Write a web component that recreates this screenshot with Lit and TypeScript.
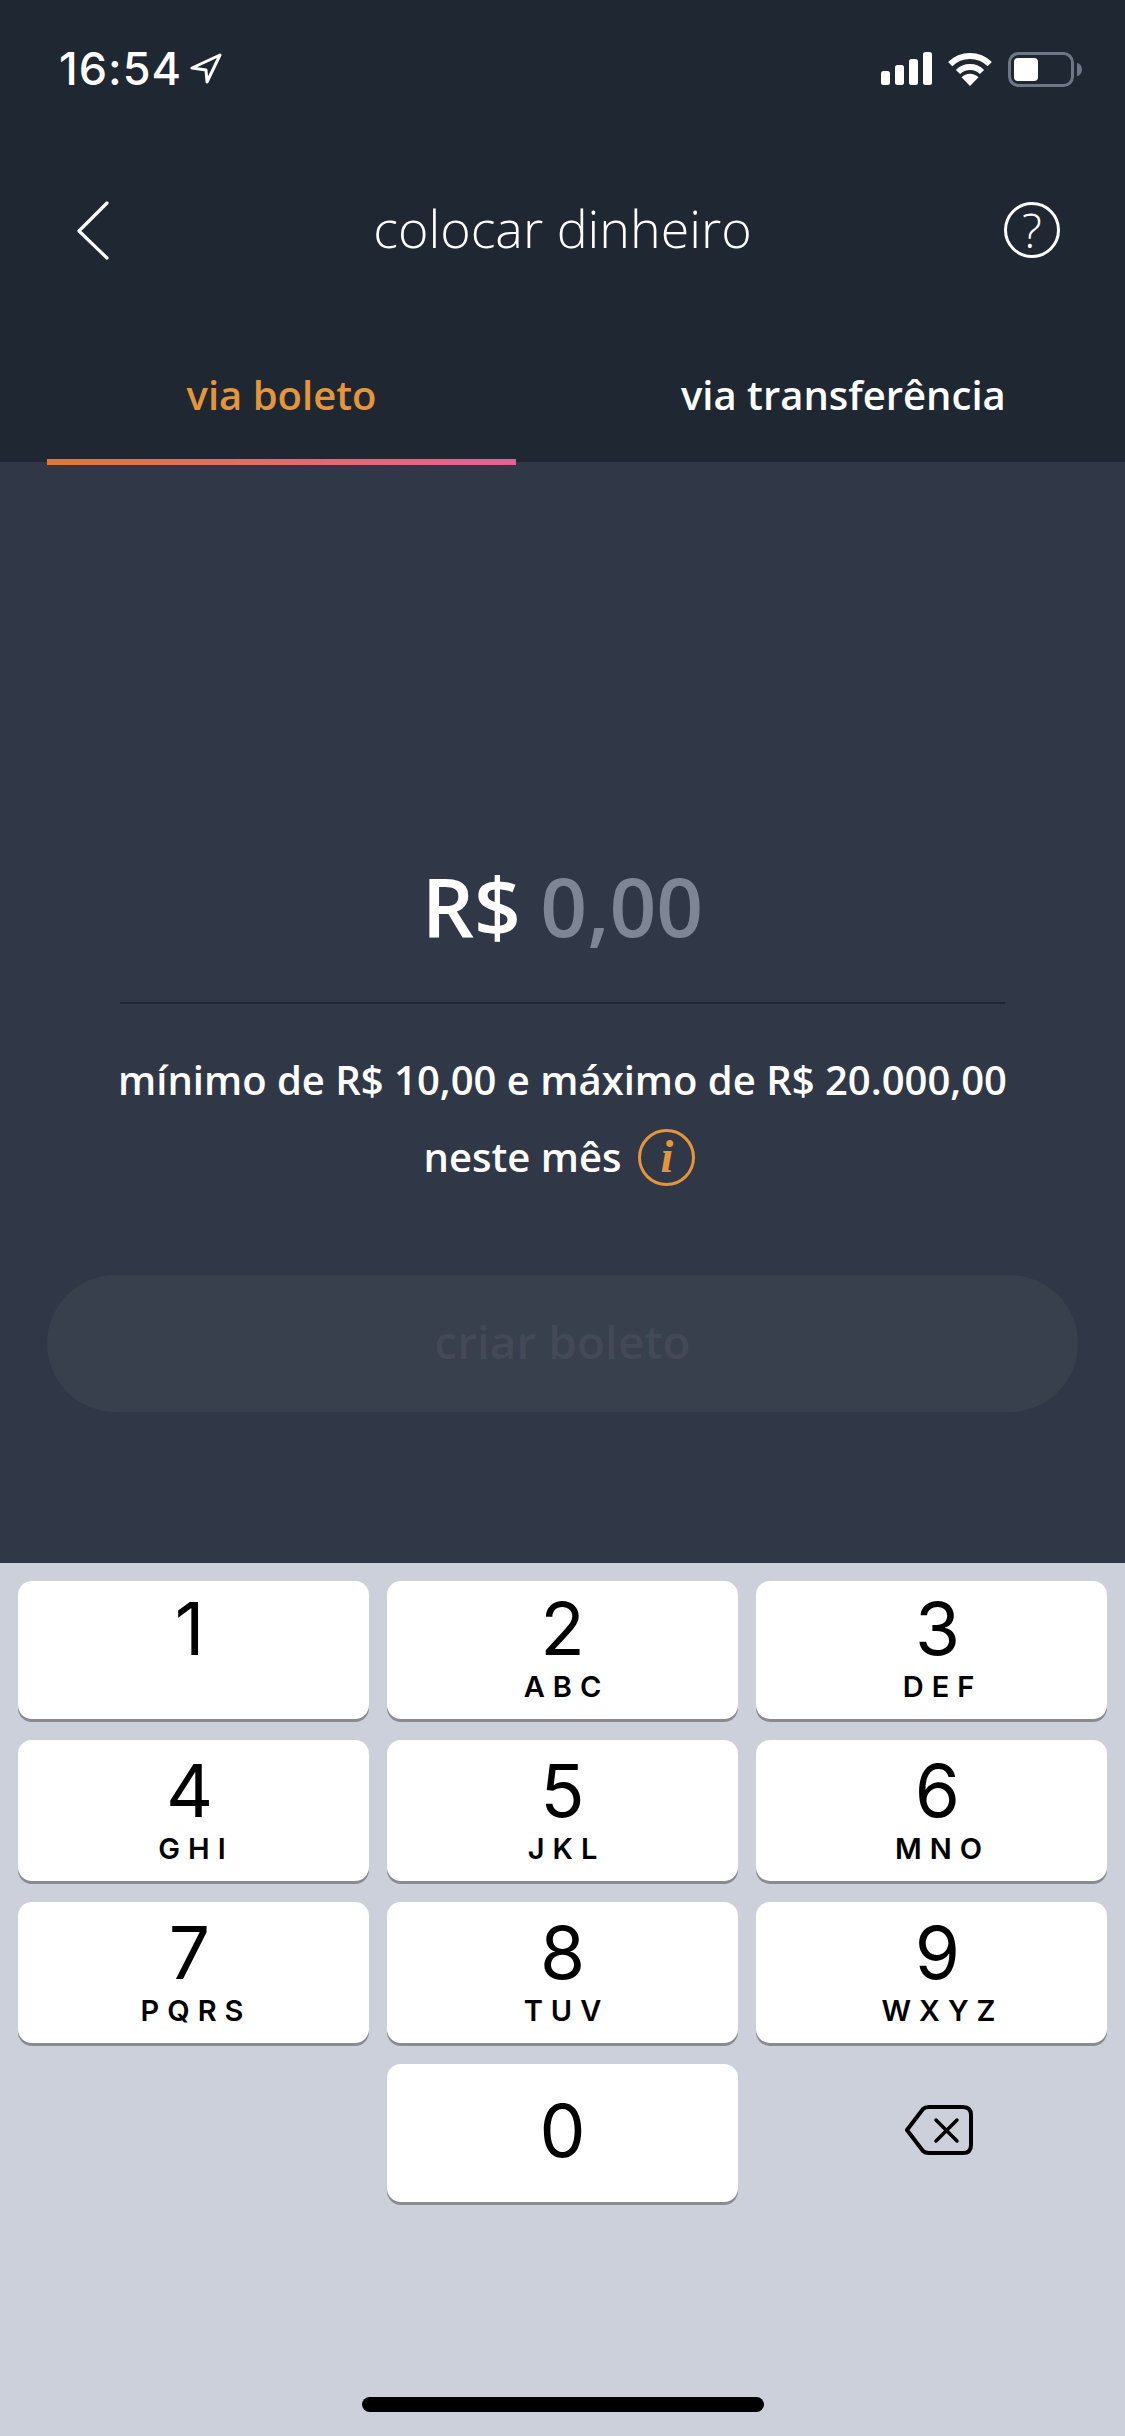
import { LitElement, html, css } from "lit";
import { customElement } from "lit/decorators.js";

const KEYS: [string, string][] = [
  ["1", ""], ["2", "ABC"], ["3", "DEF"],
  ["4", "GHI"], ["5", "JKL"], ["6", "MNO"],
  ["7", "PQRS"], ["8", "TUV"], ["9", "WXYZ"],
];

@customElement("app-root")
export class AppRoot extends LitElement {
  static styles = css`
    :host { display: block; width: 1125px; height: 2436px; overflow: hidden; font-family: "Open Sans", sans-serif; }
    .page { display: flex; flex-direction: column; height: 2436px; background: #303848; }
    .head { height: 462px; background: #1f2733; color: #fff; display: flex; flex-direction: column; position: relative; }
    .status { height: 138px; display: flex; justify-content: space-between; padding: 0 43px 0 59px; align-items: flex-start; box-sizing: border-box; }
    .time { display: flex; align-items: center; gap: 8px; margin-top: 44px; font: 500 45px/50px Inter, sans-serif; letter-spacing: 1px; }
    .time svg { display: block; margin-top: -2px; }
    .icons { display: flex; align-items: flex-start; margin-top: 52px; gap: 15px; }
    .icons svg { display: block; }
    .nav { height: 90px; margin-top: 47px; display: flex; align-items: center; justify-content: space-between; padding: 0 65px 0 76px; position: relative; }
    .title { position: absolute; left: 0; right: 0; top: -2px; text-align: center; font-weight: 300; font-size: 52px; line-height: 90px; }
    .help { width: 56px; height: 56px; box-sizing: border-box; border: 3px solid #fff; border-radius: 50%; display: flex; align-items: center; justify-content: center; font-size: 47px; font-weight: 300; line-height: 1; }
    .tabs { display: grid; grid-template-columns: 516px 1fr; flex: 1; }
    .tab { display: flex; justify-content: center; font-size: 40px; font-weight: 600; line-height: 56px; padding-top: 92px; }
    .tab.on { color: #e5953a; padding-left: 47px; }
    .tab.off { justify-content: flex-start; padding-left: 165px; }
    .bar { position: absolute; left: 47px; width: 469px; top: 459px; height: 6px; background: linear-gradient(90deg, #da7a38, #e75f96); }
    .main { flex: 1; display: flex; flex-direction: column; align-items: center; color: #fff; }
    .amount { margin-top: 388px; font-size: 82px; font-weight: 600; line-height: 110px; height: 110px; word-spacing: -2px; }
    .amount span { color: #7e8594; }
    .rule { width: 885px; height: 2px; background: #1f2733; margin-top: 42px; }
    .note { margin-top: 39px; font-size: 40px; font-weight: 600; line-height: 74px; text-align: center; display: flex; flex-direction: column; align-items: center; }
    .note .l2 { display: flex; align-items: center; gap: 17px; margin-top: 3px; margin-right: 6px; }
    .info { width: 57px; height: 57px; box-sizing: border-box; border: 3.5px solid #e5953a; border-radius: 50%; color: #e5953a; display: flex; align-items: center; justify-content: center; font: italic 700 46px/1 "Liberation Serif", serif; }
    .cta { margin-top: 81px; width: 1031px; height: 137px; box-sizing: border-box; padding-bottom: 5px; border-radius: 69px; background: #383f4d; color: #434957; display: flex; align-items: center; justify-content: center; font-size: 46px; font-weight: 600; }
    .kb { height: 873px; box-sizing: border-box; background: #cbd0da; padding: 18px 18px 0; position: relative; }
    .grid { display: grid; grid-template-columns: repeat(3, 351px); grid-template-rows: 138px 141px 141px 138px; gap: 21px 18px; }
    .key { background: #fff; border-radius: 14px; box-shadow: 0 3px 0 #898b91; display: flex; flex-direction: column; align-items: center; justify-content: flex-end; color: #000; position: relative; box-sizing: border-box; }
    .key:nth-child(3n) { padding-left: 14px; }
    .key:nth-child(3n) .d { margin-right: 2px; }
    .key:nth-child(3n+1) { padding-right: 3px; }
    .key:nth-child(3n+1) .d { margin-right: 5px; }
    .d { font: 400 73px/53px Inter, sans-serif; height: 53px; }
    .k { font: 600 29px/22px Inter, sans-serif; letter-spacing: 8px; margin-right: -8px; height: 22px; margin-top: 21px; margin-bottom: 21px; }
    .key.zero { padding-bottom: 45px; padding-right: 0; }
    .key.zero .d { margin-right: 0; }
    .back { display: flex; align-items: flex-start; justify-content: center; padding-top: 41px; padding-left: 15px; }
    .homebar { position: absolute; left: 362px; top: 834px; width: 402px; height: 15px; border-radius: 8px; background: #000; }
  `;

  render() {
    return html`<div class="page">
      <div class="head">
        <div class="status">
          <div class="time">16:54
            <svg width="32" height="31" viewBox="0 0 32 31" fill="none" stroke="#fff" stroke-width="3" stroke-linejoin="round"><path d="M30 2 L2 15 L16 17 L17 29 Z"/></svg>
          </div>
          <div class="icons">
            <svg width="51" height="33" viewBox="0 0 51 33" fill="#fff">
              <rect x="0" y="19" width="9" height="14" rx="2.5"/><rect x="14" y="13" width="9" height="20" rx="2.5"/><rect x="28" y="7" width="9" height="26" rx="2.5"/><rect x="42" y="0" width="9" height="33" rx="2.5"/>
            </svg>
            <svg width="46" height="34" viewBox="0 0 46 34" fill="none" stroke="#fff" stroke-width="6">
              <path d="M3.2 12.2 A28 28 0 0 1 42.8 12.2"/><path d="M11 20 A17 17 0 0 1 35 20"/><path d="M23 34 L14.5 25.3 A12 12 0 0 1 31.5 25.3 Z" fill="#fff" stroke="none"/>
            </svg>
            <svg width="74" height="35" viewBox="0 0 74 35">
              <rect x="1.5" y="1.5" width="63" height="32" rx="9" fill="none" stroke="#6f7684" stroke-width="3"/>
              <rect x="6" y="6" width="24" height="23" rx="4" fill="#fff"/>
              <path d="M69 11 a5 6.500 0 0 1 0 13 z" fill="#6f7684"/>
            </svg>
          </div>
        </div>
        <div class="nav">
          <svg width="34" height="59" viewBox="0 0 34 59" fill="none" stroke="#fff" stroke-width="3.200" stroke-linecap="round" stroke-linejoin="round"><path d="M31 2 L3 30 L31 57"/></svg>
          <div class="title">colocar dinheiro</div>
          <div class="help">?</div>
        </div>
        <div class="tabs">
          <div class="tab on">via boleto</div>
          <div class="tab off">via transferência</div>
        </div>
        <div class="bar"></div>
      </div>
      <div class="main">
        <div class="amount">R$ <span>0,00</span></div>
        <div class="rule"></div>
        <div class="note">
          <div>mínimo de R$ 10,00 e máximo de R$ 20.000,00</div>
          <div class="l2">neste mês <div class="info">i</div></div>
        </div>
        <div class="cta">criar boleto</div>
      </div>
      <div class="kb">
        <div class="grid">
          ${KEYS.map(([d, k]) => html`<div class="key"><div class="d">${d}</div><div class="k">${k}</div></div>`)}
          <div></div>
          <div class="key zero"><div class="d">0</div></div>
          <div class="back">
            <svg width="68" height="50" viewBox="0 0 68 50" fill="none" stroke="#000" stroke-width="4" stroke-linecap="round" stroke-linejoin="round">
              <path d="M2 25 L18 4 Q20 2 24 2 H58 Q66 2 66 10 V40 Q66 48 58 48 H24 Q20 48 18 46 Z"/>
              <path d="M31 15 L52 36 M52 15 L31 36" stroke-width="3.500"/>
            </svg>
          </div>
        </div>
        <div class="homebar"></div>
      </div>
    </div>`;
  }
}
